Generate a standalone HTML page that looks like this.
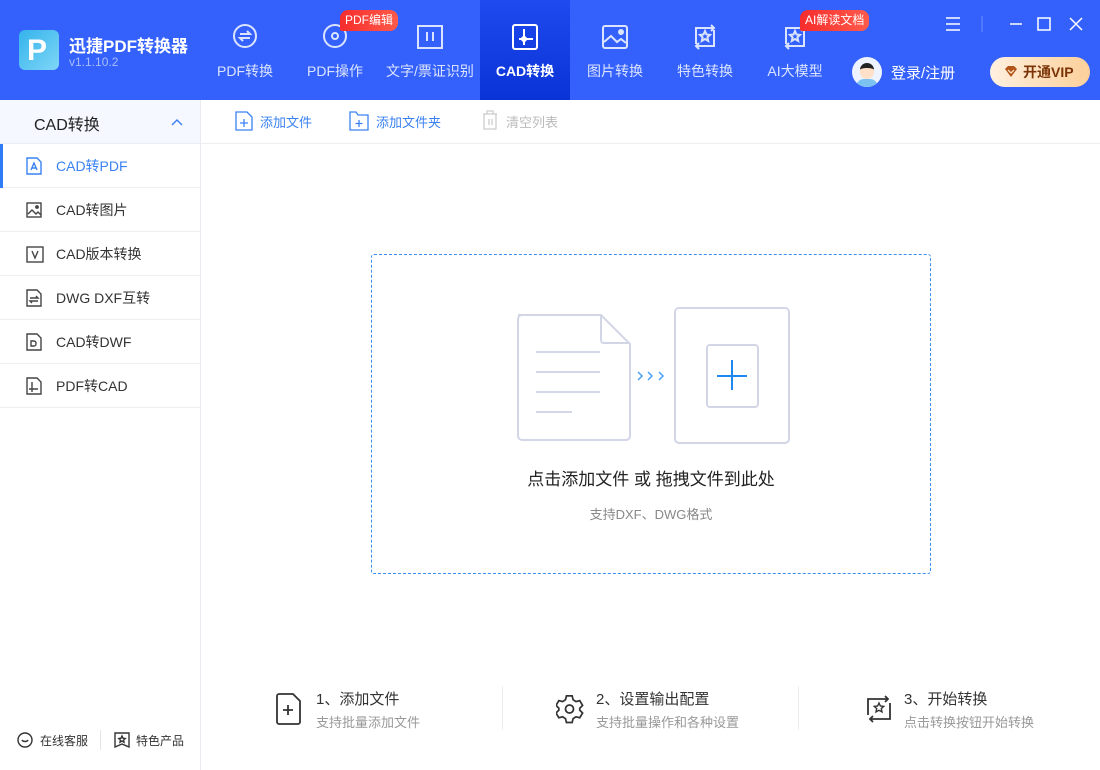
<!DOCTYPE html>
<html><head><meta charset="utf-8"><style>
*{margin:0;padding:0;box-sizing:border-box}
body{width:1100px;height:770px;overflow:hidden;background:#fff;font-family:"Liberation Sans","Noto Sans CJK SC",sans-serif;position:relative;color:#333}
.hdr{position:absolute;left:0;top:0;width:1100px;height:100px;background:#3461fb}
.abs{position:absolute}
.tab{position:absolute;top:0;height:100px;width:90px;text-align:center;color:#dbe4ff;font-size:14px}
.tab svg{position:absolute;left:30px;top:22px}
.tab span{position:absolute;left:0;right:0;top:61px;white-space:nowrap}
.badge{position:absolute;top:10px;height:21px;line-height:21px;padding:0 5px;border-radius:8px 8px 8px 2px;background:linear-gradient(90deg,#f52d2d,#ff5a4a);color:#fff;font-size:12px;white-space:nowrap}
.side{position:absolute;left:0;top:100px;width:201px;height:670px;border-right:1px solid #e8ebf0}
.item{position:absolute;left:0;width:200px;height:44px;border-bottom:1px solid #eceef2;font-size:14px;color:#333}
.item svg{position:absolute;left:26px;top:13px}
.item span{position:absolute;left:56px;top:12px}
.step{position:absolute;top:688px}
.step b{font-weight:normal;font-size:15px;color:#333;position:absolute;left:40px;top:0;white-space:nowrap}
.step i{font-style:normal;font-size:13px;color:#999;position:absolute;left:40px;top:24px;white-space:nowrap}
</style></head><body>
<div class="hdr"></div>
<div class="abs" style="left:19px;top:30px;width:40px;height:40px;border-radius:6px;background:linear-gradient(135deg,#34b3ec,#7fd6f7)"></div>
<div class="abs" style="left:27px;top:36px;color:#fff;font-weight:bold;font-size:30px;line-height:30px;font-family:'Liberation Sans',sans-serif">P</div>
<div class="abs" style="left:69px;top:32px;color:#fff;font-size:17px;font-weight:bold">迅捷PDF转换器</div>
<div class="abs" style="left:69px;top:55px;color:#a9bdfc;font-size:12px">v1.1.10.2</div>
<div class="tab" style="left:200px"><svg width="30" height="30" viewBox="0 0 30 30" fill="none" stroke="#dbe4ff" stroke-width="2"><circle cx="15" cy="14" r="11"/><path d="M10 12h10l-3-3M20 16H10l3 3"/></svg><span>PDF转换</span></div>
<div class="tab" style="left:290px"><svg width="30" height="30" viewBox="0 0 30 30" fill="none" stroke="#dbe4ff" stroke-width="2"><circle cx="15" cy="14" r="11"/><circle cx="15" cy="14" r="3"/></svg><span>PDF操作</span></div>
<div class="badge" style="left:340px">PDF编辑</div>
<div class="tab" style="left:385px"><svg width="30" height="30" viewBox="0 0 30 30" fill="none" stroke="#dbe4ff" stroke-width="2"><path d="M3 4h24v22H3z"/><path d="M12 10v9M18 10v9"/></svg><span>文字/票证识别</span></div>
<div class="tab" style="left:480px;background:linear-gradient(180deg,#1e4aef,#0a33d6);color:#fff;font-weight:bold"><svg width="30" height="30" viewBox="0 0 30 30" fill="none" stroke="#fff" stroke-width="2"><rect x="3" y="3" width="24" height="24" rx="2"/><path d="M14 7v16M9 17h14"/><circle cx="14" cy="17" r="2" fill="#fff"/></svg><span>CAD转换</span></div>
<div class="tab" style="left:570px"><svg width="30" height="30" viewBox="0 0 30 30" fill="none" stroke="#dbe4ff" stroke-width="2"><rect x="3" y="4" width="24" height="22" rx="2"/><path d="M4 20l7-6 6 6 4-3 5 4"/><circle cx="21" cy="10" r="2" fill="#dbe4ff"/></svg><span>图片转换</span></div>
<div class="tab" style="left:660px"><svg width="30" height="30" viewBox="0 0 30 30" fill="none" stroke="#dbe4ff" stroke-width="2"><path d="M6 22V6h18M21 3l3 3-3 3M24 8v16H6M9 27l-3-3 3-3"/><path d="M15 9l1.5 3.5 3.5.4-2.6 2.4.8 3.6L15 17l-3.2 1.9.8-3.6L10 12.9l3.5-.4z"/></svg><span>特色转换</span></div>
<div class="tab" style="left:750px"><svg width="30" height="30" viewBox="0 0 30 30" fill="none" stroke="#dbe4ff" stroke-width="2"><path d="M6 22V6h18M21 3l3 3-3 3M24 8v16H6M9 27l-3-3 3-3"/><path d="M15 9l1.5 3.5 3.5.4-2.6 2.4.8 3.6L15 17l-3.2 1.9.8-3.6L10 12.9l3.5-.4z"/></svg><span>AI大模型</span></div>
<div class="badge" style="left:800px">AI解读文档</div>
<svg class="abs" style="left:940px;top:14px" width="150" height="20" fill="none" stroke="#fff" stroke-width="1.5"><path d="M6 4h14M6 10h14M6 16h14"/><path d="M42 2v16" stroke="#5b7ffc"/><path d="M70 10h12M98 4h12v12H98zM130 4l12 12M142 4l-12 12"/></svg>
<div class="abs" style="left:852px;top:57px;width:30px;height:30px;border-radius:50%;background:#eef4ff;overflow:hidden"><div style="position:absolute;left:8px;top:6px;width:14px;height:16px;border-radius:7px;background:#ffe0c8;border-top:5px solid #222"></div><div style="position:absolute;left:4px;top:22px;width:22px;height:10px;border-radius:8px 8px 0 0;background:#7cc2f0"></div></div>
<div class="abs" style="left:891px;top:62px;color:#fff;font-size:15px">登录/注册</div>
<div class="abs" style="left:990px;top:57px;width:100px;height:30px;border-radius:15px;background:linear-gradient(90deg,#fff0e0,#fcd09a);color:#7a3306;font-weight:bold;font-size:14px;line-height:30px;padding-left:33px">开通VIP</div>
<svg class="abs" style="left:1004px;top:66px" width="14" height="12"><path d="M1 3l3-3h6l3 3-6 8z" fill="#b2531a"/><path d="M4 4l3 3 3-3" stroke="#fde0bf" fill="none" stroke-width="1.3"/></svg>
<div class="side">
<div style="position:absolute;left:0;top:0;width:200px;height:44px;background:#f5f8ff;border-bottom:1px solid #eceef2"><span style="position:absolute;left:34px;top:11px;font-size:16px;color:#222">CAD转换</span><svg style="position:absolute;left:171px;top:18px" width="12" height="8" fill="none" stroke="#3a7cf0" stroke-width="1.4"><path d="M1 7l5-5 5 5"/></svg></div>
<div class="item" style="top:44px;color:#3a82f2"><div style="position:absolute;left:0;top:0;width:3px;height:44px;background:#2e7cf6"></div><svg width="16" height="18" fill="none" stroke="#3a82f2" stroke-width="1.4"><path d="M1 1h10l4 4v12H1z"/><path d="M5 13l3-7 3 7M6 11h4"/></svg><span>CAD转PDF</span></div>
<div class="item" style="top:88px"><svg width="16" height="18" fill="none" stroke="#444" stroke-width="1.4"><rect x="1" y="2" width="14" height="14"/><path d="M2 13l4-4 4 4 2-2 3 3"/><circle cx="11" cy="6" r="1.2" fill="#444"/></svg><span>CAD转图片</span></div>
<div class="item" style="top:132px"><svg width="18" height="18" fill="none" stroke="#444" stroke-width="1.4"><rect x="1" y="2" width="16" height="15"/><path d="M6 6l3 7 3-7"/></svg><span>CAD版本转换</span></div>
<div class="item" style="top:176px"><svg width="16" height="18" fill="none" stroke="#444" stroke-width="1.4"><path d="M1 1h10l4 4v12H1z"/><path d="M4 9h8l-2-2M12 12H4l2 2"/></svg><span>DWG DXF互转</span></div>
<div class="item" style="top:220px"><svg width="16" height="18" fill="none" stroke="#444" stroke-width="1.4"><path d="M1 1h10l4 4v12H1z"/><path d="M5 8h3a2 2 0 012 2v1a2 2 0 01-2 2H5z"/></svg><span>CAD转DWF</span></div>
<div class="item" style="top:264px"><svg width="16" height="18" fill="none" stroke="#444" stroke-width="1.4"><path d="M1 1h10l4 4v12H1z"/><path d="M6 5v10M3 12h9"/></svg><span>PDF转CAD</span></div>
<svg style="position:absolute;left:17px;top:632px" width="16" height="16" fill="none" stroke="#333" stroke-width="1.4"><circle cx="8" cy="8" r="7"/><path d="M5 8c1 2 5 2 6 0"/></svg>
<span style="position:absolute;left:40px;top:632px;font-size:12px;color:#333">在线客服</span>
<div style="position:absolute;left:100px;top:630px;width:1px;height:20px;background:#e5e5e5"></div>
<svg style="position:absolute;left:114px;top:632px" width="16" height="16" fill="none" stroke="#333" stroke-width="1.4"><path d="M1 1h14v14l-7-3-7 3z"/><path d="M8 4l1 2.2 2.2.3-1.6 1.5.4 2.2L8 9l-2 1.2.4-2.2L4.8 6.5 7 6.2z"/></svg>
<span style="position:absolute;left:136px;top:632px;font-size:12px;color:#333">特色产品</span>
</div>
<div class="abs" style="left:201px;top:143px;width:899px;height:1px;background:#eceef2"></div>
<svg class="abs" style="left:235px;top:111px" width="18" height="20" fill="none" stroke="#3a82f2" stroke-width="1.3"><path d="M1 1h11l5 5v13H1z"/><path d="M9 8v8M5 12h8"/></svg>
<span class="abs" style="left:260px;top:112px;font-size:13px;color:#3a82f2">添加文件</span>
<svg class="abs" style="left:349px;top:111px" width="20" height="20" fill="none" stroke="#3a82f2" stroke-width="1.3"><path d="M1 1h6l2 3h10v15H1z"/><path d="M10 9v7M6.5 12.5h7"/></svg>
<span class="abs" style="left:376px;top:112px;font-size:13px;color:#3a82f2">添加文件夹</span>
<svg class="abs" style="left:482px;top:110px" width="16" height="20" fill="none" stroke="#ccc" stroke-width="1.3"><path d="M1 4h14M5 4V1h6v3M2 4v15h12V4M7 9v6M10 9v6"/></svg>
<span class="abs" style="left:506px;top:112px;font-size:13px;color:#bbb">清空列表</span>
<div class="abs" style="left:371px;top:254px;width:560px;height:320px;border:1px dashed #3a8ef0;border-radius:3px"></div>
<svg class="abs" style="left:510px;top:300px" width="290" height="150" fill="none" stroke="#d2d6e6" stroke-width="2"><path d="M8 15h83l29 29v92a4 4 0 01-4 4H12a4 4 0 01-4-4V19a4 4 0 014-4z"/><path d="M91 15v25a3 3 0 003 3h26"/><path d="M26 52h64M26 72h64M26 92h64M26 112h36"/><rect x="165" y="8" width="114" height="135" rx="4"/><rect x="197" y="45" width="51" height="62" rx="3"/><path d="M222 60v30M207 76h30" stroke="#1e88f0"/><path d="M128 72l4 4-4 4M138 72l4 4-4 4M149 72l4 4-4 4" stroke="#4aa0f5" stroke-width="1.5"/></svg>
<div class="abs" style="left:371px;width:560px;top:465px;text-align:center;font-size:17px;color:#222">点击添加文件 或 拖拽文件到此处</div>
<div class="abs" style="left:371px;width:560px;top:504px;text-align:center;font-size:13px;color:#888">支持DXF、DWG格式</div>
<div class="step" style="left:276px"><svg width="28" height="34" fill="none" stroke="#333" stroke-width="1.8" style="position:absolute;top:4px"><path d="M3 2h14l7 7v21a2 2 0 01-2 2H3a2 2 0 01-2-2V4a2 2 0 012-2z"/><path d="M12 13v10M7 18h10"/></svg><b>1、添加文件</b><i>支持批量添加文件</i></div>
<div style="position:absolute;left:502px;top:686px;width:1px;height:44px;background:#ececec"></div>
<div class="step" style="left:556px"><svg width="28" height="30" fill="none" stroke="#333" stroke-width="1.8" style="position:absolute;top:6px"><path d="M11 2h6l1 4 3 2 4-1 3 5-3 3v2l3 3-3 5-4-1-3 2-1 4h-6l-1-4-3-2-4 1-3-5 3-3v-2l-3-3 3-5 4 1 3-2z" transform="scale(.95)"/><circle cx="13.5" cy="15" r="4"/></svg><b>2、设置输出配置</b><i>支持批量操作和各种设置</i></div>
<div style="position:absolute;left:798px;top:686px;width:1px;height:44px;background:#ececec"></div>
<div class="step" style="left:864px"><svg width="30" height="32" fill="none" stroke="#333" stroke-width="1.8" style="position:absolute;top:5px"><path d="M4 22V6h20M21 3l3 3-3 3M26 10v16H6M9 29l-3-3 3-3"/><path d="M15 10l1.4 3 3.3.4-2.4 2.2.7 3.3L15 17.3l-3 1.6.7-3.3-2.4-2.2 3.3-.4z" stroke-width="1.4"/></svg><b>3、开始转换</b><i>点击转换按钮开始转换</i></div>
</body></html>
